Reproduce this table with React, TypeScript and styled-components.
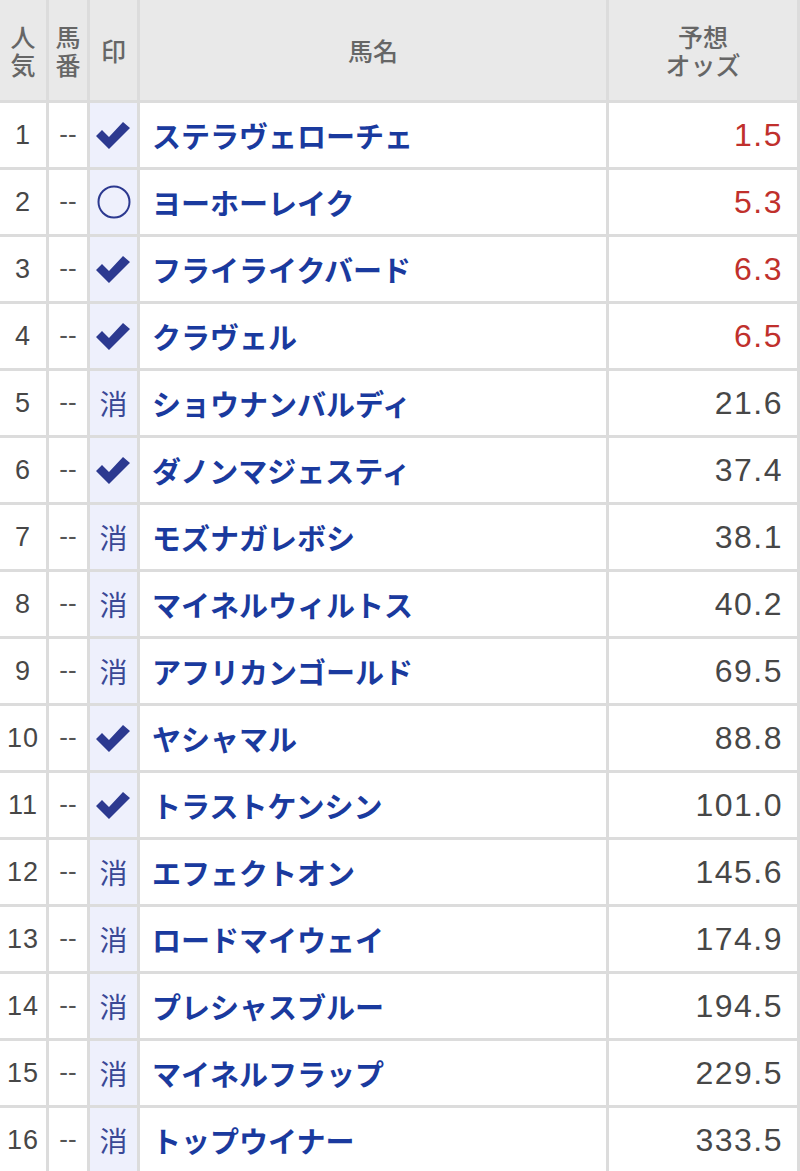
import React from 'react';
import styled, { createGlobalStyle, css } from 'styled-components';

const GlobalStyle = createGlobalStyle`
  html, body {
    margin: 0;
    padding: 0;
    background: #ffffff;
  }
  body {
    font-family: "Noto Sans CJK JP", "Noto Sans", sans-serif;
  }
`;

type Mark = 'check' | 'circle' | 'kesu';

type Horse = {
  rank: number;
  mark: Mark;
  name: string;
  odds: string;
};

const horses: Horse[] = [
  { rank: 1, mark: 'check', name: 'ステラヴェローチェ', odds: '1.5' },
  { rank: 2, mark: 'circle', name: 'ヨーホーレイク', odds: '5.3' },
  { rank: 3, mark: 'check', name: 'フライライクバード', odds: '6.3' },
  { rank: 4, mark: 'check', name: 'クラヴェル', odds: '6.5' },
  { rank: 5, mark: 'kesu', name: 'ショウナンバルディ', odds: '21.6' },
  { rank: 6, mark: 'check', name: 'ダノンマジェスティ', odds: '37.4' },
  { rank: 7, mark: 'kesu', name: 'モズナガレボシ', odds: '38.1' },
  { rank: 8, mark: 'kesu', name: 'マイネルウィルトス', odds: '40.2' },
  { rank: 9, mark: 'kesu', name: 'アフリカンゴールド', odds: '69.5' },
  { rank: 10, mark: 'check', name: 'ヤシャマル', odds: '88.8' },
  { rank: 11, mark: 'check', name: 'トラストケンシン', odds: '101.0' },
  { rank: 12, mark: 'kesu', name: 'エフェクトオン', odds: '145.6' },
  { rank: 13, mark: 'kesu', name: 'ロードマイウェイ', odds: '174.9' },
  { rank: 14, mark: 'kesu', name: 'プレシャスブルー', odds: '194.5' },
  { rank: 15, mark: 'kesu', name: 'マイネルフラップ', odds: '229.5' },
  { rank: 16, mark: 'kesu', name: 'トップウイナー', odds: '333.5' },
];

const BORDER = '#dcdcdc';
const NAVY = '#2c3990';

const Table = styled.div`
  width: 800px;
  display: flex;
  flex-direction: column;
`;

const Grid = styled.div<{ $head?: boolean }>`
  display: grid;
  grid-template-columns: 49px 41px 50px 469px 191px;
  height: ${(p) => (p.$head ? '103px' : '67px')};
  box-sizing: border-box;
  border-bottom: 3px solid ${BORDER};
  background: ${(p) => (p.$head ? '#e9e9e9' : '#ffffff')};
`;

const cellBase = css`
  display: flex;
  align-items: center;
  box-sizing: border-box;
  border-right: 3px solid ${BORDER};
  min-width: 0;
`;

const HeadCell = styled.div`
  ${cellBase};
  flex-direction: column;
  justify-content: center;
  text-align: center;
  color: #666666;
  font-family: "Noto Sans CJK JP", sans-serif;
  font-size: 25px;
  font-weight: 500;
  line-height: 28px;
`;

const HeadLine = styled.span`
  display: block;
  height: 28px;
`;

const RankCell = styled.div`
  ${cellBase};
  justify-content: center;
  color: #474747;
  font-family: "Liberation Sans", Arial, sans-serif;
  font-size: 27px;
  letter-spacing: 1px;
`;

const NumCell = styled.div`
  ${cellBase};
  justify-content: center;
  color: #555555;
  font-family: "Liberation Sans", sans-serif;
  font-size: 26px;
  padding-bottom: 2px;
`;

const MarkCell = styled.div`
  ${cellBase};
  justify-content: center;
  background: #eef0fc;
`;

const KesuText = styled.span`
  color: #3a4896;
  font-family: "Noto Sans CJK JP", sans-serif;
  font-size: 28px;
  font-weight: 400;
`;

const NameCell = styled.div`
  ${cellBase};
  padding-left: 12px;
  color: #1a3a9e;
  font-family: "Noto Sans CJK JP", sans-serif;
  font-size: 29px;
  font-weight: 700;
  white-space: nowrap;
`;

const OddsCell = styled.div<{ $hot: boolean }>`
  ${cellBase};
  justify-content: flex-end;
  padding-right: 14px;
  color: ${(p) => (p.$hot ? '#c0302c' : '#474747')};
  font-family: "Liberation Sans", Arial, sans-serif;
  font-size: 32px;
  letter-spacing: 1.5px;
`;

const CheckIcon = () => (
  <svg width="35" height="29" viewBox="0 0 35 29" aria-hidden="true">
    <path d="M0 15 L6 9 L13 16 L27 1 L34 7 L13 28 Z" fill={NAVY} />
  </svg>
);

const CircleIcon = () => (
  <svg width="34" height="34" viewBox="0 0 34 34" aria-hidden="true">
    <circle cx="17" cy="17" r="15.5" fill="none" stroke={NAVY} strokeWidth="2" />
  </svg>
);

const MarkIcon = ({ mark }: { mark: Mark }) => {
  if (mark === 'check') return <CheckIcon />;
  if (mark === 'circle') return <CircleIcon />;
  return <KesuText>消</KesuText>;
};

export default function App() {
  return (
    <>
      <GlobalStyle />
      <Table>
        <Grid $head>
          <HeadCell>
            <HeadLine>人</HeadLine>
            <HeadLine>気</HeadLine>
          </HeadCell>
          <HeadCell>
            <HeadLine>馬</HeadLine>
            <HeadLine>番</HeadLine>
          </HeadCell>
          <HeadCell>印</HeadCell>
          <HeadCell>馬名</HeadCell>
          <HeadCell>
            <HeadLine>予想</HeadLine>
            <HeadLine>オッズ</HeadLine>
          </HeadCell>
        </Grid>
        {horses.map((h) => (
          <Grid key={h.rank}>
            <RankCell>{h.rank}</RankCell>
            <NumCell>--</NumCell>
            <MarkCell>
              <MarkIcon mark={h.mark} />
            </MarkCell>
            <NameCell>{h.name}</NameCell>
            <OddsCell $hot={h.rank <= 4}>{h.odds}</OddsCell>
          </Grid>
        ))}
      </Table>
    </>
  );
}
